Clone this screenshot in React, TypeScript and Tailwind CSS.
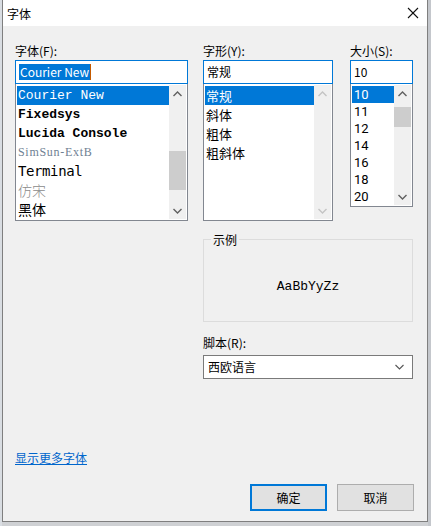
import React from 'react';

const ui = { fontFamily: '"Noto Sans CJK SC", "Noto Sans", sans-serif' };
const mono = { fontFamily: '"Liberation Mono", "Noto Sans CJK SC", monospace' };
const digits = { fontFamily: 'Roboto, "Liberation Sans", sans-serif' };

interface FontRow {
  label: string;
  className: string;
  style: React.CSSProperties;
}

const fontRows: FontRow[] = [
  { label: 'Courier New', className: 'text-[13px]', style: mono },
  { label: 'Fixedsys', className: 'text-[13px] font-bold', style: mono },
  { label: 'Lucida Console', className: 'text-[13px] font-bold', style: mono },
  {
    label: 'SimSun-ExtB',
    className: 'text-[12px] text-[#6f7f93]',
    style: { fontFamily: '"Liberation Serif", serif', letterSpacing: '0.7px' },
  },
  {
    label: 'Terminal',
    className: 'text-[14px]',
    style: { fontFamily: '"DejaVu Sans Mono", monospace', letterSpacing: '-0.4px' },
  },
  { label: '仿宋', className: 'text-[14px] font-light text-[#8a8a8a]', style: ui },
  { label: '黑体', className: 'text-[14px]', style: ui },
];

const styleRows = ['常规', '斜体', '粗体', '粗斜体'];
const sizeRows = ['10', '11', '12', '14', '16', '18', '20'];

const Chevron = ({ up, color }: { up?: boolean; color: string }) => (
  <svg width="9" height="6" viewBox="0 0 9 6">
    <polyline
      points={up ? '0.5,5 4.5,1 8.5,5' : '0.5,1 4.5,5 8.5,1'}
      fill="none"
      stroke={color}
      strokeWidth="1.4"
    />
  </svg>
);

interface ScrollBarProps {
  disabled?: boolean;
  thumbTop?: number;
  thumbHeight?: number;
}

const ScrollBar = ({ disabled, thumbTop, thumbHeight }: ScrollBarProps) => {
  const color = disabled ? '#c4c4c4' : '#606060';
  return (
    <div className="relative flex w-[17px] flex-col justify-between bg-[#f0f0f0]">
      <div className="flex h-[17px] items-center justify-center">
        <Chevron up color={color} />
      </div>
      {thumbHeight ? (
        <div
          className="absolute left-0 w-[17px] bg-[#cdcdcd]"
          style={{ top: thumbTop, height: thumbHeight }}
        ></div>
      ) : (
        <></>
      )}
      <div className="flex h-[17px] items-center justify-center">
        <Chevron color={color} />
      </div>
    </div>
  );
};

const TextBox = ({ children, width }: { children: React.ReactNode; width: string }) => (
  <div
    className={`flex h-[24px] items-center border border-[#0078d7] bg-white px-[3px] text-[12px] ${width}`}
    style={ui}
  >
    {children}
  </div>
);

const App = () => {
  return (
    <div className="flex h-[526px] w-[431px] bg-[#cfd1d4]">
      <div className="w-[2px] bg-[#d9dde2]"></div>
      <div className="flex h-[522px] w-[426px] flex-col border-x border-b border-[#7f7f7f] bg-[#f0f0f0] text-black">
        {/* title bar */}
        <div className="flex h-[26px] items-center justify-between bg-white pl-[4px] pr-[8px]">
          <span className="text-[12px] leading-[15px]" style={ui}>
            字体
          </span>
          <svg width="12" height="12" viewBox="0 0 12 12">
            <line x1="1" y1="1" x2="11" y2="11" stroke="#111" strokeWidth="1.1" />
            <line x1="11" y1="1" x2="1" y2="11" stroke="#111" strokeWidth="1.1" />
          </svg>
        </div>

        <div className="flex flex-1 flex-col pl-[12px]" style={ui}>
          {/* top three columns */}
          <div className="flex pt-[17px]">
            <div className="flex w-[173px] flex-col">
              <div className="h-[17px] text-[12px] leading-[15px]">字体(F):</div>
              <TextBox width="w-[173px]">
                <span className="flex items-center">
                  <span className="bg-[#0078d7] px-[1px] leading-[16px] text-white">Courier New</span>
                  <span className="h-[16px] w-[1px] bg-[#c45a00]"></span>
                </span>
              </TextBox>
              <div className="flex h-[137px] border border-t-0 border-[#828790] bg-white p-[1px]">
                <div className="flex flex-1 flex-col pt-[1px]">
                  {fontRows.map((row, index) => (
                    <div
                      key={index}
                      className={`flex h-[19px] items-center pl-[1px] leading-[19px] ${row.className} ${
                        index === 0 && 'bg-[#0078d7] !text-white'
                      }`}
                      style={row.style}
                    >
                      {row.label}
                    </div>
                  ))}
                </div>
                <ScrollBar thumbTop={66} thumbHeight={39} />
              </div>
            </div>

            <div className="ml-[15px] flex w-[130px] flex-col">
              <div className="h-[17px] text-[12px] leading-[15px]">字形(Y):</div>
              <TextBox width="w-[130px]">常规</TextBox>
              <div className="flex h-[137px] border border-t-0 border-[#828790] bg-white p-[1px]">
                <div className="flex flex-1 flex-col pt-[1px]">
                  {styleRows.map((row, index) => (
                    <div
                      key={index}
                      className={`flex h-[19px] items-center pl-[1px] text-[13px] leading-[19px] ${
                        index === 0 && 'bg-[#0078d7] text-white'
                      }`}
                    >
                      {row}
                    </div>
                  ))}
                </div>
                <ScrollBar disabled />
              </div>
            </div>

            <div className="ml-[17px] flex w-[63px] flex-col">
              <div className="h-[17px] text-[12px] leading-[15px]">大小(S):</div>
              <TextBox width="w-[63px]">10</TextBox>
              <div className="flex h-[123px] border border-t-0 border-[#828790] bg-white p-[1px]">
                <div className="flex flex-1 flex-col pt-[1px]">
                  {sizeRows.map((row, index) => (
                    <div
                      key={index}
                      className={`flex h-[17px] items-center pl-[2px] text-[13px] leading-[17px] ${
                        index === 0 && 'bg-[#0078d7] text-white'
                      }`}
                      style={digits}
                    >
                      {row}
                    </div>
                  ))}
                </div>
                <ScrollBar thumbTop={22} thumbHeight={20} />
              </div>
            </div>
          </div>

          {/* sample + script */}
          <div className="ml-[188px] flex w-[210px] flex-col pt-[11px]">
            <fieldset className="h-[90px] border border-[#dcdcdc] px-0 pb-0">
              <legend className="ml-[7px] px-[2px] text-[12px] leading-[15px]">示例</legend>
              <div className="flex justify-center pt-[30px] text-[13px]" style={mono}>
                AaBbYyZz
              </div>
            </fieldset>
            <div className="mt-[13px] h-[20px] text-[12px] leading-[15px]">脚本(R):</div>
            <div className="flex h-[24px] items-center justify-between border border-[#7a7a7a] bg-white pl-[4px] pr-[8px] text-[12px]">
              <span>西欧语言</span>
              <svg width="9" height="6" viewBox="0 0 9 6">
                <polyline points="0.5,1 4.5,5 8.5,1" fill="none" stroke="#555" strokeWidth="1.1" />
              </svg>
            </div>
          </div>

          {/* more fonts link */}
          <div className="mt-[71px] h-[16px] text-[12px] leading-[16px]">
            <span className="text-[#0066cc] underline">显示更多字体</span>
          </div>

          {/* buttons */}
          <div className="mt-[18px] flex justify-end gap-[10px] pr-[13px]">
            <button className="flex h-[27px] w-[77px] items-center justify-center border-2 border-[#0078d7] bg-[#e1e1e1] text-[12px]">
              确定
            </button>
            <button className="flex h-[27px] w-[77px] items-center justify-center border border-[#adadad] bg-[#e1e1e1] text-[12px]">
              取消
            </button>
          </div>
        </div>
      </div>
      <div className="flex-1 bg-[#c4c7cc]"></div>
    </div>
  );
};

export default App;
